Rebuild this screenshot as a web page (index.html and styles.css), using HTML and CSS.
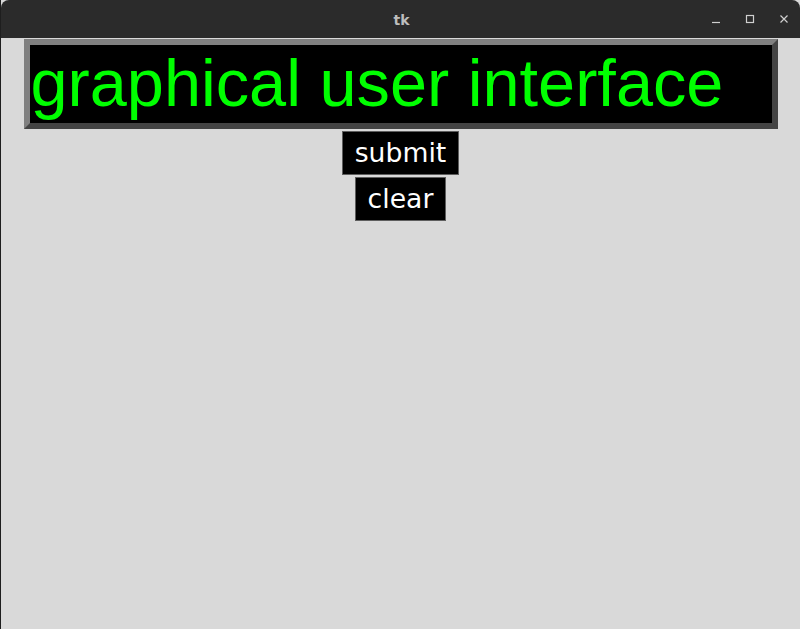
FILE: index.html
```html
<!DOCTYPE html>
<html>
<head>
<meta charset="utf-8">
<link rel="stylesheet" href="styles.css">
</head>
<body>
<div class="window">
  <div class="titlebar">
    <span class="title">tk</span>
    <div class="controls">
      <svg class="ctl" width="12" height="12" viewBox="0 0 12 12"><path d="M2 9.5h8" stroke="#cfcfcf" stroke-width="1.2"/></svg>
      <svg class="ctl" width="12" height="12" viewBox="0 0 12 12"><rect x="2.5" y="2.5" width="7" height="7" fill="none" stroke="#cfcfcf" stroke-width="1.2"/></svg>
      <svg class="ctl" width="12" height="12" viewBox="0 0 12 12"><path d="M2.5 2.5l7 7M9.5 2.5l-7 7" stroke="#cfcfcf" stroke-width="1.2"/></svg>
    </div>
  </div>
  <div class="content">
    <div class="entry"><span class="entry-text">graphical user interface</span></div>
    <button class="btn btn-submit">submit</button>
    <button class="btn btn-clear">clear</button>
  </div>
</div>
</body>
</html>
```

FILE: styles.css
```css
html, body {
  margin: 0;
  padding: 0;
  background: #d9d9d9;
}

.window {
  width: 800px;
  height: 629px;
  box-sizing: border-box;
  border-left: 1px solid #1e1e1e;
  background: #d9d9d9;
  display: flex;
  flex-direction: column;
}

.titlebar {
  height: 38px;
  flex: none;
  background: #2b2b2b;
  border-radius: 8px 8px 0 0;
  position: relative;
  display: flex;
  align-items: center;
  justify-content: center;
}

.title {
  font-family: "DejaVu Sans", sans-serif;
  font-weight: bold;
  font-size: 14px;
  color: #bdbdbd;
  margin-left: 2px;
  padding-top: 2px;
}

.controls {
  position: absolute;
  right: 10px;
  top: 13px;
  display: flex;
  gap: 22px;
}

.ctl {
  display: block;
}

.content {
  display: flex;
  flex-direction: column;
  align-items: center;
  padding-top: 1px;
  gap: 2px;
}

.entry {
  width: 754px;
  height: 90px;
  box-sizing: border-box;
  background: #000;
  border-style: solid;
  border-width: 6px;
  border-color: #808080 #444444 #444444 #808080;
  display: flex;
  align-items: center;
  padding-left: 1px;
  overflow: hidden;
}

.entry-text {
  font-family: "Liberation Sans", Arial, sans-serif;
  font-size: 66.67px;
  line-height: 78px;
  color: #00ff00;
  white-space: nowrap;
  position: relative;
  top: -1px;
}

.btn {
  background: #000;
  color: #ffffff;
  border: 1px solid #5e5e5e;
  font-family: "DejaVu Sans", sans-serif;
  font-size: 26.67px;
  line-height: 42px;
  height: 44px;
  padding: 0 11.7px;
  margin: 0;
  box-sizing: border-box;
  cursor: default;
}
```
